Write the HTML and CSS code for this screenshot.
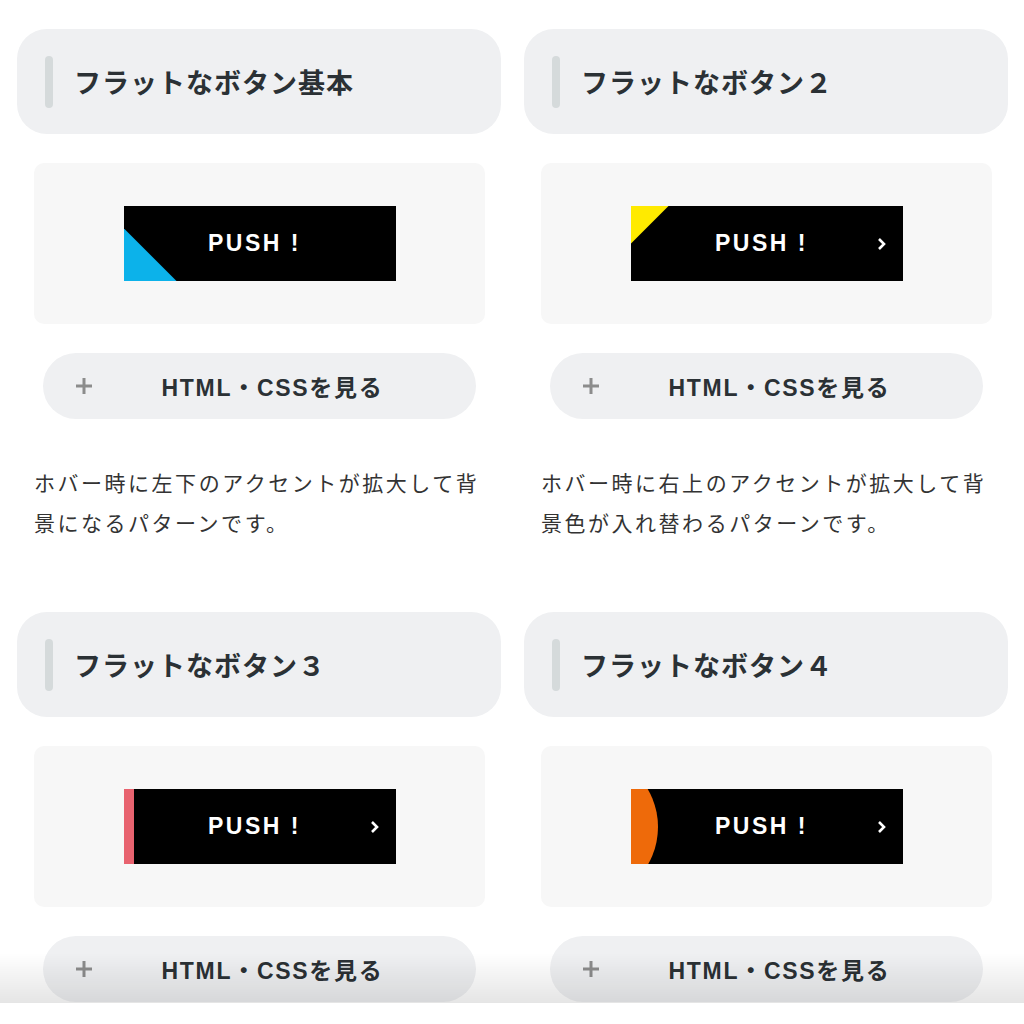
FILE: index.html
```html
<!DOCTYPE html>
<html lang="ja">
<head>
    <meta charset="UTF-8">
    <meta name="viewport" content="width=device-width, initial-scale=1.0">
    <title>フラットなボタン</title>
    <link rel="stylesheet" href="styles.css">
</head>
<body>

<main class="grid">

    <!-- 基本 -->
    <section class="item">
        <h2 class="item-title">フラットなボタン基本</h2>
        <div class="demo">
            <a href="#" class="btn btn-corner">PUSH !</a>
        </div>
        <button class="code-toggle">
            <svg class="plus" width="16" height="16" viewBox="0 0 16 16"><path d="M8 0v16M0 8h16" stroke="#8c8c8c" stroke-width="3"/></svg>
            <span class="label">HTML・CSSを見る</span>
        </button>
        <p class="desc">ホバー時に左下のアクセントが拡大して背景になるパターンです。</p>
    </section>

    <!-- 2 -->
    <section class="item">
        <h2 class="item-title">フラットなボタン２</h2>
        <div class="demo">
            <a href="#" class="btn btn-top">PUSH !
                <svg class="arrow" width="10" height="14" viewBox="0 0 10 14"><polyline points="2,2 7,7 2,12" fill="none" stroke="#fff" stroke-width="2.6"/></svg>
            </a>
        </div>
        <button class="code-toggle">
            <svg class="plus" width="16" height="16" viewBox="0 0 16 16"><path d="M8 0v16M0 8h16" stroke="#8c8c8c" stroke-width="3"/></svg>
            <span class="label">HTML・CSSを見る</span>
        </button>
        <p class="desc">ホバー時に右上のアクセントが拡大して背景色が入れ替わるパターンです。</p>
    </section>

    <!-- 3 -->
    <section class="item">
        <h2 class="item-title">フラットなボタン３</h2>
        <div class="demo">
            <a href="#" class="btn btn-line">PUSH !
                <svg class="arrow" width="10" height="14" viewBox="0 0 10 14"><polyline points="2,2 7,7 2,12" fill="none" stroke="#fff" stroke-width="2.6"/></svg>
            </a>
        </div>
        <button class="code-toggle">
            <svg class="plus" width="16" height="16" viewBox="0 0 16 16"><path d="M8 0v16M0 8h16" stroke="#8c8c8c" stroke-width="3"/></svg>
            <span class="label">HTML・CSSを見る</span>
        </button>
    </section>

    <!-- 4 -->
    <section class="item">
        <h2 class="item-title">フラットなボタン４</h2>
        <div class="demo">
            <a href="#" class="btn btn-circle">PUSH !
                <svg class="arrow" width="10" height="14" viewBox="0 0 10 14"><polyline points="2,2 7,7 2,12" fill="none" stroke="#fff" stroke-width="2.6"/></svg>
            </a>
        </div>
        <button class="code-toggle">
            <svg class="plus" width="16" height="16" viewBox="0 0 16 16"><path d="M8 0v16M0 8h16" stroke="#8c8c8c" stroke-width="3"/></svg>
            <span class="label">HTML・CSSを見る</span>
        </button>
    </section>

</main>

<div class="bottom-bar"></div>

</body>
</html>
```

FILE: styles.css
```css
body {
    font-family: "Noto Sans CJK JP", "Noto Sans", sans-serif;
    color: #2b3135;
    background-color: #fff;
    margin: 0;
    padding: 0;
}

.grid {
    display: grid;
    grid-template-columns: 484px 484px;
    column-gap: 23px;
    row-gap: 70px;
    padding: 29px 16px 0 17px;
}

.item-title {
    display: flex;
    align-items: center;
    height: 105px;
    margin: 0;
    padding: 0 28px;
    background-color: #eff0f2;
    border-radius: 30px;
    font-size: 27px;
    font-weight: bold;
    letter-spacing: 1px;
}

.item-title::before {
    content: "";
    width: 8px;
    height: 52px;
    margin-right: 21px;
    border-radius: 4px;
    background-color: #d5dadb;
}

.demo {
    display: flex;
    justify-content: center;
    align-items: center;
    height: 161px;
    margin: 29px 16px 0 17px;
    background-color: #f7f7f7;
    border-radius: 10px;
}

/* ボタン本体 */
.btn {
    position: relative;
    overflow: hidden;
    display: flex;
    justify-content: center;
    align-items: center;
    width: 272px;
    height: 75px;
    padding-right: 10px;
    box-sizing: border-box;
    background-color: #000;
    color: #fff;
    font-family: "Liberation Sans", Arial, sans-serif;
    font-size: 23px;
    font-weight: bold;
    letter-spacing: 2.5px;
    text-decoration: none;
}

.btn .arrow {
    position: absolute;
    right: 16px;
    top: 31px;
}

/* アクセント */
.btn-corner::before {
    content: "";
    position: absolute;
    left: 0;
    bottom: 0;
    width: 53px;
    height: 53px;
    background-color: #0cb2ea;
    clip-path: polygon(0 0, 100% 100%, 0 100%);
}

.btn-top::before {
    content: "";
    position: absolute;
    left: 0;
    top: 0;
    width: 38px;
    height: 38px;
    background-color: #ffea00;
    clip-path: polygon(0 0, 100% 0, 0 100%);
}

.btn-line::before {
    content: "";
    position: absolute;
    left: 0;
    top: 0;
    width: 10px;
    height: 100%;
    background-color: #e8636f;
}

.btn-circle::before {
    content: "";
    position: absolute;
    left: -123px;
    top: 50%;
    width: 150px;
    height: 150px;
    margin-top: -75px;
    border-radius: 50%;
    background-color: #ee6a0a;
}

/* コード表示ボタン */
.code-toggle {
    display: flex;
    align-items: center;
    width: calc(100% - 51px);
    height: 66px;
    margin: 29px 25px 0 26px;
    padding: 0 33px;
    border: none;
    border-radius: 33px;
    background-color: #eff0f2;
    color: #2b3135;
    font-family: "Liberation Sans", "Noto Sans CJK JP", sans-serif;
    font-size: 23px;
    font-weight: bold;
    cursor: pointer;
}

.code-toggle .label {
    flex: 1;
    padding-left: 10px;
    text-align: center;
    letter-spacing: 1.7px;
}

.desc {
    margin: 43px 17px 0 17px;
    font-size: 21px;
    line-height: 40px;
    letter-spacing: 0.12em;
    color: #333;
}

/* 下部の固定バー */
.bottom-bar {
    position: fixed;
    left: 0;
    right: 0;
    bottom: 0;
    height: 21px;
    background-color: #fff;
}

.bottom-bar::before {
    content: "";
    position: absolute;
    left: 0;
    right: 0;
    bottom: 100%;
    height: 50px;
    background: linear-gradient(to bottom, rgba(0, 0, 0, 0), rgba(0, 0, 0, 0.1));
}
```
